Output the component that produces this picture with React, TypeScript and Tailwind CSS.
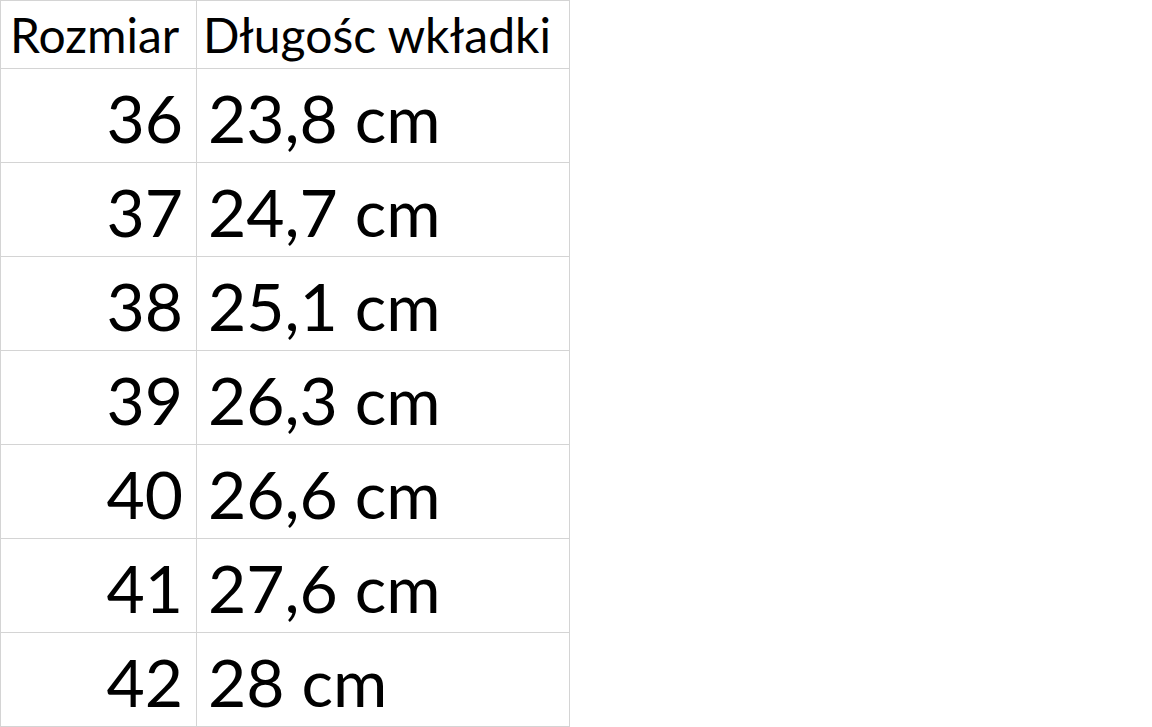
const rows: [string, string][] = [
  ["36", "23,8 cm"],
  ["37", "24,7 cm"],
  ["38", "25,1 cm"],
  ["39", "26,3 cm"],
  ["40", "26,6 cm"],
  ["41", "27,6 cm"],
  ["42", "28 cm"],
];

export default function App() {
  return (
    <div className="h-[727px] w-[1152px] overflow-hidden bg-white font-['Lato',sans-serif] text-black">
      <div className="grid w-[570px] grid-cols-[196px_373px] border-l border-t border-[#d4d4d4]">
        <div className="flex h-[68px] items-end border-b border-r border-[#d4d4d4] pb-[9px] pl-[9px]">
          <span className="text-[48px] leading-none">Rozmiar</span>
        </div>
        <div className="flex h-[68px] items-end border-b border-r border-[#d4d4d4] pb-[9px] pl-[6px]">
          <span className="text-[48px] leading-none">Długośc wkładki</span>
        </div>
        {rows.map(([size, length]) => (
          <div key={size} className="contents">
            <div className="flex h-[94px] items-end justify-end border-b border-r border-[#d4d4d4] pb-[11px] pr-[13px]">
              <span className="text-[66px] leading-none">{size}</span>
            </div>
            <div className="flex h-[94px] items-end border-b border-r border-[#d4d4d4] pb-[11px] pl-[11px]">
              <span className="text-[66px] leading-none">{length}</span>
            </div>
          </div>
        ))}
      </div>
    </div>
  );
}
